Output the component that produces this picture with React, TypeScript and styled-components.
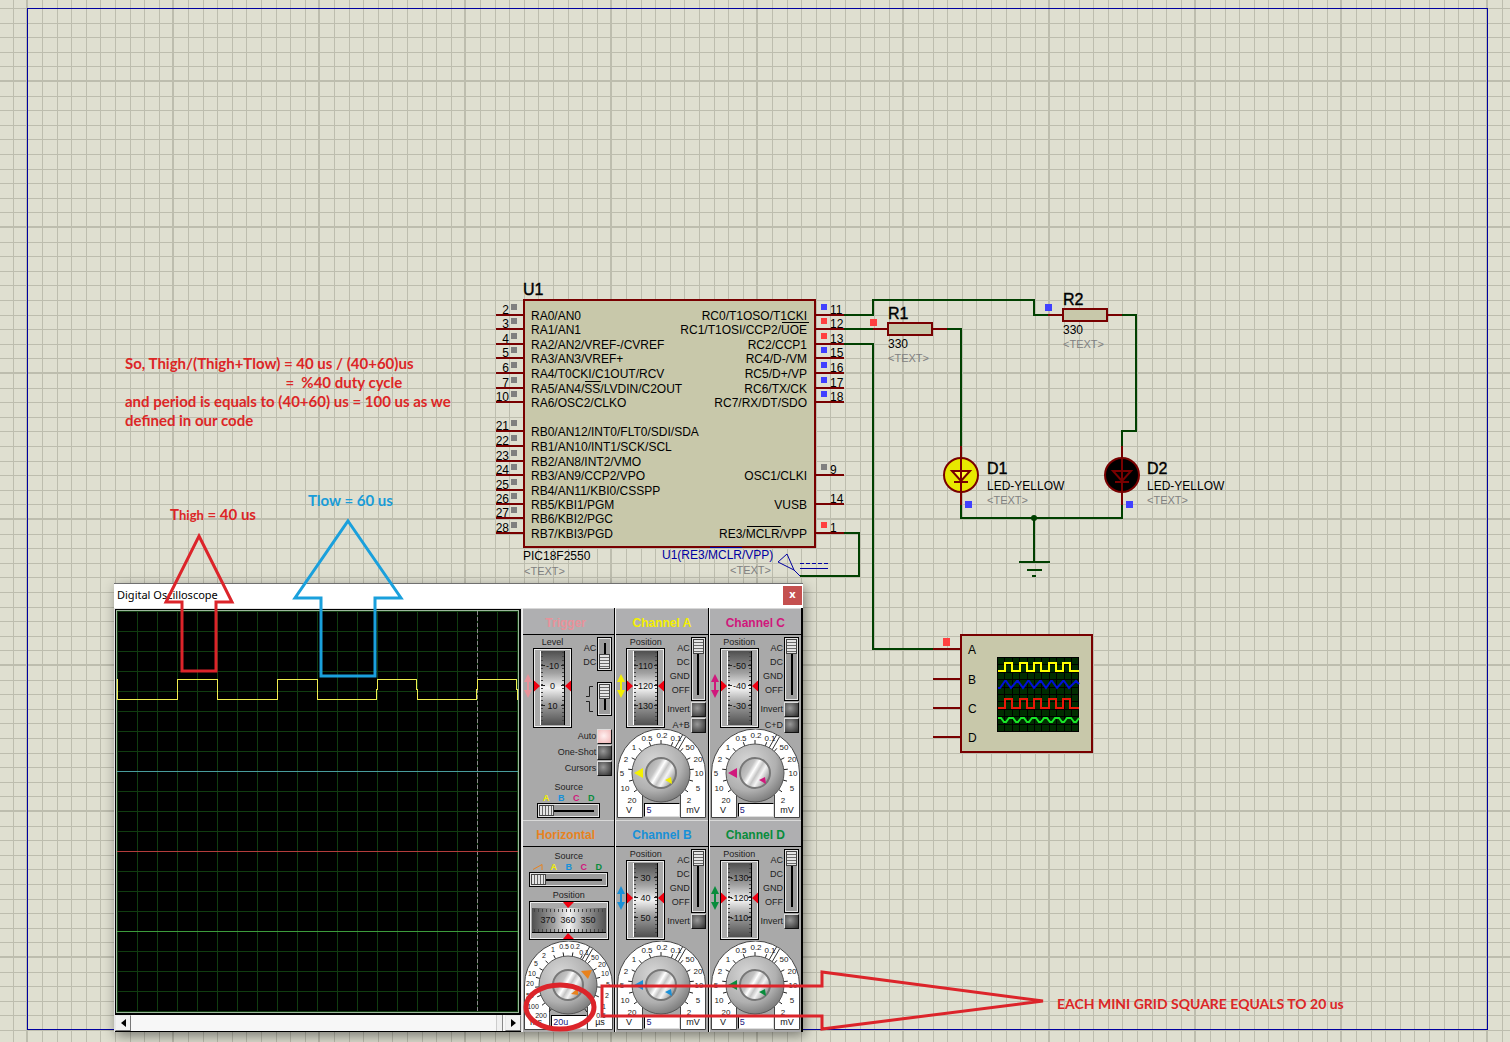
import React from "react";
import styled, { createGlobalStyle } from "styled-components";

const sans = `"Liberation Sans", Arial, sans-serif`;

const GlobalStyle = createGlobalStyle`
  *, *::before, *::after { box-sizing: border-box; }
  body { margin: 0; font-family: ${sans}; background: #dfdfd0; }
`;

/* ---------- Worksheet ---------- */

const Worksheet = styled.main`
  position: relative;
  display: flex;
  min-height: 100vh;
  padding: 8px 22px 12px 27px;
  overflow: hidden;
  background: #dfdfd0;
`;

const SheetFrame = styled.div`
  position: relative;
  flex: 1;
  border: 1px solid #0000a0;
`;

const GridLayer = styled.svg`
  position: absolute;
  inset: 0;
  width: 100%;
  height: 100%;
`;

const CanvasLayer = styled.svg`
  position: absolute;
  top: 0;
  left: 0;
  width: 1px;
  height: 1px;
  overflow: visible;
  pointer-events: none;
`;

const minorX = [16, 31, 45, 60, 74, 89, 104, 118, 133];
const minorY = [16, 30, 45, 59, 74, 89, 103, 118, 132];

function SheetGrid() {
  return (
    <GridLayer aria-hidden="true" shapeRendering="crispEdges">
      <defs>
        <pattern id="sheet" x="26" y="80" width="146" height="146" patternUnits="userSpaceOnUse">
          <g fill="#bdbdae">
            {minorX.map((x) => <rect key={x} x={x} width="1" height="146" />)}
            {minorY.map((y) => <rect key={y} y={y} height="1" width="146" />)}
            <rect width="2" height="146" />
            <rect width="146" height="2" />
          </g>
        </pattern>
      </defs>
      <rect width="100%" height="100%" fill="url(#sheet)" />
    </GridLayer>
  );
}

/* ---------- Schematic ---------- */

const Label = styled.text<{ $size?: number; $fill?: string }>`
  font: ${(p) => p.$size ?? 12}px ${sans};
  fill: ${(p) => p.$fill ?? "#000"};
`;

const RefName = styled.text`
  font: 16px ${sans};
  fill: #000;
  stroke: #000;
  stroke-width: 0.4px;
`;

const RED = "#780000";
const GREEN = "#004000";
const BODY = "#c8c8aa";
const GREY = "#808080";
const HIGH = "#ff4040";
const LOW = "#4040ff";

type Pin = [y: number, num: string, name: string, state?: string];

const leftPins: Pin[] = [
  [315, "2", "RA0/AN0", GREY],
  [329, "3", "RA1/AN1", GREY],
  [344, "4", "RA2/AN2/VREF-/CVREF", GREY],
  [358, "5", "RA3/AN3/VREF+", GREY],
  [373, "6", "RA4/T0CKI/C1OUT/RCV", GREY],
  [388, "7", "RA5/AN4/SS/LVDIN/C2OUT", GREY],
  [402, "10", "RA6/OSC2/CLKO", GREY],
  [431, "21", "RB0/AN12/INT0/FLT0/SDI/SDA", GREY],
  [446, "22", "RB1/AN10/INT1/SCK/SCL", GREY],
  [461, "23", "RB2/AN8/INT2/VMO", GREY],
  [475, "24", "RB3/AN9/CCP2/VPO", GREY],
  [490, "25", "RB4/AN11/KBI0/CSSPP", GREY],
  [504, "26", "RB5/KBI1/PGM", GREY],
  [518, "27", "RB6/KBI2/PGC", GREY],
  [533, "28", "RB7/KBI3/PGD", GREY],
];

const rightPins: Pin[] = [
  [315, "11", "RC0/T1OSO/T1CKI", LOW],
  [329, "12", "RC1/T1OSI/CCP2/UOE", HIGH],
  [344, "13", "RC2/CCP1", HIGH],
  [358, "15", "RC4/D-/VM", LOW],
  [373, "16", "RC5/D+/VP", LOW],
  [388, "17", "RC6/TX/CK", LOW],
  [402, "18", "RC7/RX/DT/SDO", LOW],
  [475, "9", "OSC1/CLKI", GREY],
  [504, "14", "VUSB"],
  [533, "1", "RE3/MCLR/VPP", HIGH],
];

function Chip() {
  return (
    <g>
      <RefName x="523" y="295">U1</RefName>
      <rect x="524" y="300" width="291" height="247" fill={BODY} stroke={RED} strokeWidth="2" />
      {leftPins.map(([y, num, name, state]) => (
        <g key={num}>
          <path d={`M496 ${y}H523`} stroke={RED} strokeWidth="2" />
          <rect x="511" y={y - 11} width="6" height="6" fill={state} />
          <Label x="509" y={y - 1} textAnchor="end">{num}</Label>
          <Label x="531" y={y + 5}>{name}</Label>
        </g>
      ))}
      {rightPins.map(([y, num, name, state]) => (
        <g key={num}>
          <path d={`M816 ${y}H844`} stroke={RED} strokeWidth="2" />
          {state && <rect x="821" y={y - 11} width="6" height="6" fill={state} />}
          <Label x="830" y={y - 1}>{num}</Label>
          <Label x="807" y={y + 5} textAnchor="end">{name}</Label>
        </g>
      ))}
      <path d="M782 322.5H809M585 381.5H601M747 526.5H781" stroke="#000" />
      <Label x="523" y="560">PIC18F2550</Label>
      <Label x="524" y="575" $size={11} $fill={GREY}>&lt;TEXT&gt;</Label>
      <Label x="662" y="559" $fill="#0000a0">U1(RE3/MCLR/VPP)</Label>
      <path d="M710 547.5H742" stroke="#0000a0" />
      <Label x="730" y="574" $size={11} $fill={GREY}>&lt;TEXT&gt;</Label>
      <path d="M778 562L787 554L794 570ZM794 570L800 576" fill="none" stroke="#0000a0" />
      <path d="M800 563.5H828" stroke="#0000a0" strokeDasharray="4 2" />
      <path d="M800 568.5H828" stroke="#0000a0" />
    </g>
  );
}

function Resistor({ x, y, name }: { x: number; y: number; name: string }) {
  return (
    <g>
      <path d={`M${x - 15} ${y}H${x}M${x + 45} ${y}H${x + 59}`} stroke={RED} strokeWidth="2" />
      <rect x={x} y={y - 6} width="44" height="12" fill={BODY} stroke={RED} strokeWidth="2" />
      <RefName x={x} y={y - 10}>{name}</RefName>
      <Label x={x} y={y + 19}>330</Label>
      <Label x={x} y={y + 33} $size={11} $fill={GREY}>&lt;TEXT&gt;</Label>
    </g>
  );
}

function Led({ x, name, lit, textX }: { x: number; name: string; lit: boolean; textX: number }) {
  return (
    <g>
      <circle cx={x} cy="475" r="17" fill={lit ? "#e8e800" : "#000"} stroke={RED} strokeWidth="2" />
      <path
        d={`M${x} 446V505M${x - 9} 471H${x + 9}L${x} 481ZM${x - 7} 482H${x + 7}`}
        fill={lit ? "#ffff30" : "#000"}
        stroke={RED}
        strokeWidth="2"
      />
      <rect x={x + 4} y="501" width="7" height="7" fill={LOW} />
      <RefName x={textX} y="474">{name}</RefName>
      <Label x={textX} y="490">LED-YELLOW</Label>
      <Label x={textX} y="504" $size={11} $fill={GREY}>&lt;TEXT&gt;</Label>
    </g>
  );
}

const miniCols = Array.from({ length: 12 }, (_, i) => 997 + Math.round(i * 7.4));
const miniRows = Array.from({ length: 11 }, (_, i) => 657 + Math.round(i * 7.4));

function squareTrace(low: number, high: number) {
  return `M998 ${low}H1005V${high}H1012V${low}H1020V${high}H1027V${low}H1034V${high}H1041V${low}H1049V${high}H1056V${low}H1063V${high}H1070V${low}H1079`;
}

function ScopeSymbol() {
  const zigzag = "M998 688H1000" + [0, 1, 2, 3, 4, 5, 6].map((i) => {
    const s = 1000 + Math.round(i * 11.6);
    return i === 6 ? `L${s + 6} 681L1079 684` : `L${s + 5} 681H${s + 6}L${s + 11} 688`;
  }).join("");
  const ripple = "M998 718" + [0, 1, 2, 3, 4, 5, 6].map((i) => {
    const s = 1000 + Math.round(i * 11.6);
    return `L${s + 1} 718L${s + 4} 722H${s + 6}L${s + 9} 718`;
  }).join("");
  return (
    <g>
      <rect x="961" y="635" width="131" height="117" fill={BODY} stroke={RED} strokeWidth="2" />
      {["A", "B", "C", "D"].map((n, i) => {
        const y = [649, 679, 708, 737][i];
        return (
          <g key={n}>
            <path d={`M933 ${y}H961`} stroke={RED} strokeWidth="2" />
            <Label x="968" y={y + 5}>{n}</Label>
          </g>
        );
      })}
      <rect x="943" y="638" width="7" height="8" fill={HIGH} />
      <rect x="997" y="657" width="82" height="74" fill="#002c00" />
      <path
        d={miniCols.map((x) => `M${x}.5 657V731`).join("") + miniRows.map((y) => `M997 ${y}.5H1079`).join("")}
        stroke="#000"
      />
      <g fill="none" strokeWidth="2">
        <path d={squareTrace(671, 663)} stroke="#ffff00" />
        <path d={zigzag} stroke="#0010d8" />
        <path d={squareTrace(708, 699)} stroke="#e81808" />
        <path d={ripple} stroke="#18e828" />
      </g>
    </g>
  );
}

function Schematic() {
  return (
    <CanvasLayer role="img" aria-label="PIC18F2550 PWM circuit">
      <g fill="none" stroke={GREEN} strokeWidth="2">
        <path d="M844 315H873V300H1034V315H1049" />
        <path d="M844 329H873M946 329H961V446" />
        <path d="M844 344H873V649H933" />
        <path d="M1121 315H1136V431H1122V446" />
        <path d="M961 505V518H1122V505M1034 518V561" />
        <path d="M1019 562H1050M1027 570H1042M1032 576H1036" />
        <path d="M844 533H859V576H800" />
      </g>
      <circle cx="1034" cy="518" r="3" fill={GREEN} />
      <Chip />
      <Resistor x={888} y={329} name="R1" />
      <Resistor x={1063} y={315} name="R2" />
      <rect x="870" y="319" width="7" height="7" fill={HIGH} />
      <rect x="1045" y="304" width="7" height="7" fill={LOW} />
      <Led x={961} name="D1" lit textX={987} />
      <Led x={1122} name="D2" lit={false} textX={1147} />
      <ScopeSymbol />
    </CanvasLayer>
  );
}

/* ---------- Oscilloscope window ---------- */

const Window = styled.section`
  position: absolute;
  top: 583px;
  left: 114px;
  width: 689px;
  border-top: 1px solid #707070;
  background: #fff;
  box-shadow: 2px 4px 12px rgba(0, 0, 0, 0.45);
`;

const TitleBar = styled.header`
  display: flex;
  align-items: center;
  justify-content: space-between;
  height: 24px;
  padding: 0 1px 2px 3px;
`;

const WindowTitle = styled.h1`
  margin: 0;
  font: 11px/20px "Noto Sans", "Open Sans", sans-serif;
  color: #000;
`;

const CloseButton = styled.button`
  width: 19px;
  height: 19px;
  padding: 0 0 2px;
  border: 0;
  background: #c4504f;
  color: #fff;
  font: bold 11px/16px "Open Sans", sans-serif;
`;

const WindowBody = styled.div`
  display: grid;
  grid-template-columns: 406px 1fr;
  gap: 1px;
  padding-left: 1px;
  background: #e4e4e4;
`;

const ScreenColumn = styled.div`
  display: flex;
  flex-direction: column;
  padding-top: 1px;
`;

const ScreenBezel = styled.div`
  border: 1px solid #000;
  border-right: 2px solid #000;
  height: 405px;
  background: #000;
`;

const Screen = styled.svg`
  display: block;
  width: 403px;
  height: 403px;
`;

const ScrollBar = styled.div`
  display: flex;
  justify-content: space-between;
  height: 18px;
  border: solid #000;
  border-width: 1px 0;
  background: #f7f7f7;
`;

const ScrollButton = styled.button`
  display: flex;
  align-items: center;
  justify-content: center;
  width: 16px;
  height: 16px;
  padding: 0;
  border: 1px solid #e8e8e8;
  border-right-color: #777;
  border-bottom-color: #777;
  background: #f2f2f2;
`;

const ScrollEnd = styled.div`
  display: flex;
  gap: 2px;
`;

const ScrollThumb = styled.div`
  width: 7px;
  height: 16px;
  border-right: 1px solid #888;
  border-left: 1px solid #ccc;
  background: #f0f0f0;
`;

const gridSteps = Array.from({ length: 21 }, (_, i) => i * 20 + 1);

function ScopeScreen() {
  return (
    <Screen viewBox="0 0 403 403" role="img" aria-label="Traces" shapeRendering="crispEdges">
      <rect width="403" height="403" fill="#000" />
      <path
        d={gridSteps.map((p) => `M${p}.5 0V403M0 ${p}.5H403`).join("")}
        stroke="#103c10"
      />
      <path d="M.5 403V.5H402.5V403M0 402.5H403" fill="none" stroke="#9db79d" />
      <path d="M361.5 1V402" stroke="#8a8a8a" strokeDasharray="4 2" />
      <path d="M1 161.5H402" stroke="#489c9c" />
      <path d="M1 241.5H402" stroke="#b43c3c" />
      <path d="M1 321.5H402" stroke="#3c9c3c" />
      <path
        d="M1.5 69V89.5H61.5V69.5H101.5V89.5H161.5V69.5H201.5V89.5H260.5V79.5H261.5V69.5H300.5V79.5H301.5V89.5H360.5V79.5H361.5V69.5H400.5V79.5H401.5V90"
        fill="none"
        stroke="#f0ee50"
      />
    </Screen>
  );
}

const ControlDeck = styled.div`
  display: grid;
  grid-template-columns: repeat(3, 1fr);
  grid-template-rows: repeat(2, 212px);
  border-right: 1px solid #000;
`;

const Panel = styled.section`
  display: flex;
  flex-direction: column;
  border-left: 1px solid #f0f0f0;
  border-right: 1px solid #000;
  background: #a9a9a9;
`;

const PanelTitle = styled.h2<{ $color: string; $inset?: boolean }>`
  height: 27px;
  margin: 0;
  padding: 2px ${(p) => (p.$inset ? 6 : 0)}px 0 0;
  border-bottom: 1px solid #000;
  border-top: 1px solid #d8d8d8;
  background: #afafb1;
  color: ${(p) => p.$color};
  font: bold 12px/24px ${sans};
  text-align: center;
`;

const Top = styled.div`
  display: flex;
  height: 94px;
  padding: 2px 2px 0 1px;
`;

const ArrowSlot = styled.svg`
  flex: none;
  width: 8px;
  height: 24px;
  margin: 37px 1px 0 0;
`;

const PositionColumn = styled.div`
  display: flex;
  flex: none;
  flex-direction: column;
  align-items: center;
  width: 39px;
`;

const Caption = styled.span`
  color: #222;
  font: 9px/11px ${sans};
  white-space: nowrap;
`;

const SwitchColumn = styled.div`
  display: flex;
  flex: 1;
  flex-direction: column;
  gap: 1px;
`;

const SwitchRow = styled.div`
  display: flex;
  justify-content: flex-end;
  gap: 1px;
`;

const SwitchLabels = styled.div`
  display: flex;
  flex-direction: column;
  padding-top: 4px;
  color: #222;
  font: 9px/14px ${sans};
  text-align: right;
`;

const SliderFrame = styled.div<{ $w: number; $h: number }>`
  display: flex;
  align-items: center;
  justify-content: center;
  width: ${(p) => p.$w}px;
  height: ${(p) => p.$h}px;
  border: 1px solid #000;
  outline: 1px solid #e4e4e4;
  outline-offset: -2px;
  background: #9c9c9c;
`;

const Range = styled.input<{ $vertical?: boolean }>`
  appearance: none;
  width: calc(100% - 2px);
  height: calc(100% - 2px);
  margin: 0;
  writing-mode: ${(p) => (p.$vertical ? "vertical-lr" : "horizontal-tb")};
  background: linear-gradient(#000, #000) center / ${(p) =>
    p.$vertical ? "2px calc(100% - 8px)" : "calc(100% - 8px) 2px"} no-repeat;

  &::-webkit-slider-thumb {
    appearance: none;
    width: ${(p) => (p.$vertical ? 11 : 15)}px;
    height: ${(p) => (p.$vertical ? 15 : 11)}px;
    border: 1px solid #444;
    background: repeating-linear-gradient(
      ${(p) => (p.$vertical ? "180deg" : "90deg")},
      #e4e4e4 0 2px,
      #6a6a6a 2px 3px
    );
  }
`;

const LampLabel = styled.label`
  display: flex;
  align-items: center;
  justify-content: flex-end;
  gap: 1px;
  height: 15px;
  color: #222;
  font: 9px/15px ${sans};
  white-space: nowrap;
`;

const Lamp = styled.button<{ $on?: boolean }>`
  width: 15px;
  height: 15px;
  padding: 0;
  border: 1px solid #111;
  border-top-color: #ddd;
  border-left-color: #ddd;
  background: ${(p) =>
    p.$on
      ? "radial-gradient(circle at 45% 45%, #fff0f0, #f0b4b4)"
      : "radial-gradient(circle at 40% 40%, #999, #2c2c2c)"};
`;

const WheelArt = styled.svg`
  display: block;
  flex: none;
`;

const Digits = styled.text`
  font: 9px ${sans};
  fill: #111;
  text-anchor: middle;
`;

const DialDigits = styled.text<{ $size: number }>`
  font: ${(p) => p.$size}px ${sans};
  fill: #222;
  text-anchor: middle;
`;

function VerticalWheel({ values }: { values: string[] }) {
  const ticks = Array.from({ length: 18 }, (_, i) => 4.5 + i * 4);
  return (
    <WheelArt width="39" height="80" viewBox="0 0 39 80">
      <defs>
        <linearGradient id="wheelV" x1="0" y1="0" x2="0" y2="1">
          <stop offset="0" stopColor="#505050" />
          <stop offset=".3" stopColor="#a2a2a2" />
          <stop offset=".5" stopColor="#f4f4f4" />
          <stop offset=".7" stopColor="#a2a2a2" />
          <stop offset="1" stopColor="#505050" />
        </linearGradient>
      </defs>
      <rect x=".5" y=".5" width="38" height="79" fill="#aaa" stroke="#000" />
      <rect x="1.5" y="1.5" width="36" height="77" fill="none" stroke="#eee" />
      <rect x="7" y="3" width="25" height="74" fill="url(#wheelV)" />
      <path d="M7.5 3V77" stroke="#fff" />
      <path d="M31.5 3V77" stroke="#000" />
      <path d={ticks.map((y) => `M8 ${y}h2M29 ${y}h2`).join("")} stroke="#444" />
      <path d="M8 17.5h4M28 17.5h3M8 37.5h4M28 37.5h3M8 57.5h4M28 57.5h3" stroke="#222" />
      <path d="M1 32.5L7 38L1 43.5ZM38 32.5L32 38L38 43.5Z" fill="#f00010" />
      {values.map((v, i) => <Digits key={v} x="19.5" y={21 + i * 20}>{v}</Digits>)}
    </WheelArt>
  );
}

function HorizontalWheel({ values }: { values: string[] }) {
  const ticks = Array.from({ length: 18 }, (_, i) => 5.5 + i * 4);
  return (
    <WheelArt width="80" height="39" viewBox="0 0 80 39">
      <defs>
        <linearGradient id="wheelH">
          <stop offset="0" stopColor="#505050" />
          <stop offset=".3" stopColor="#a2a2a2" />
          <stop offset=".5" stopColor="#f4f4f4" />
          <stop offset=".7" stopColor="#a2a2a2" />
          <stop offset="1" stopColor="#505050" />
        </linearGradient>
      </defs>
      <rect x=".5" y=".5" width="79" height="38" fill="#aaa" stroke="#000" />
      <rect x="1.5" y="1.5" width="77" height="36" fill="none" stroke="#eee" />
      <rect x="3" y="7" width="74" height="25" fill="url(#wheelH)" />
      <path d="M3 31.5H77" stroke="#000" />
      <path d={ticks.map((x) => `M${x} 8v3M${x} 28v3`).join("")} stroke="#444" />
      <path d="M34 1H45L39 7ZM34 38H45L39 32Z" fill="#f00010" />
      {values.map((v, i) => <Digits key={v} x={19 + i * 20} y="22">{v}</Digits>)}
    </WheelArt>
  );
}

const DialBox = styled.div`
  position: relative;
  width: 89px;
  margin: 0 auto;
`;

const DialArt = styled.svg`
  display: block;
  width: 89px;
  height: 89px;
`;

const DialInput = styled.input`
  position: absolute;
  right: 26px;
  bottom: 1px;
  width: 36px;
  height: 14px;
  padding: 0 1px;
  border: 1px solid #000;
  border-right-color: #ddd;
  border-bottom-color: #ddd;
  background: #fff;
  color: #202080;
  font: 9px/11px ${sans};
`;

type DialMark = [x: number, y: number, text: string];

const voltMarks: DialMark[] = [
  [5, 44, "5"], [9, 30, "2"], [17, 18, "1"], [30, 9, "0.5"], [45, 6, "0.2"], [59, 9, "0.1"],
  [73, 18, "50"], [81, 30, "20"], [82, 44, "10"], [81, 59, "5"], [72, 71, "2"],
  [15, 71, "20"], [8, 59, "10"],
];

const timeMarks: DialMark[] = [
  [40, 5, "0.5"], [51, 5, "0.2"], [60, 11, "0.1"], [71, 16, "50"], [78, 23, "20"], [81, 32, "10"],
  [84, 43, "5"], [83, 54, "2"], [80, 65, "1"], [77, 74, "0.5"], [29, 8, "1"], [20, 14, "2"],
  [12, 22, "5"], [8, 32, "10"], [6, 42, "20"], [6, 54, "50"], [9, 65, "100"], [17, 74, "200"],
];

function Dial({ color, time, value, name }: { color: string; time?: boolean; value: string; name: string }) {
  const marks = time ? timeMarks : voltMarks;
  const steps = time ? 18 : 13;
  const span = time ? 290 : 250;
  const ticks = Array.from({ length: steps }, (_, i) => {
    const a = ((-span / 2 + (i * span) / (steps - 1) - 90) * Math.PI) / 180;
    const c = Math.cos(a);
    const s = Math.sin(a);
    return `M${(44 + 29 * c).toFixed(1)} ${(44 + 29 * s).toFixed(1)}L${(44 + 33 * c).toFixed(1)} ${(44 + 33 * s).toFixed(1)}`;
  }).join("");
  return (
    <DialBox>
      <DialArt viewBox="0 0 89 89">
        <defs>
          <radialGradient id="cap" cx=".38" cy=".32" r=".8">
            <stop offset="0" stopColor="#d8d8d8" />
            <stop offset=".6" stopColor="#b0b0b0" />
            <stop offset="1" stopColor="#686868" />
          </radialGradient>
          <linearGradient id="hub" x1="0" y1="0" x2="1" y2=".6">
            <stop offset="0" stopColor="#999" />
            <stop offset=".4" stopColor="#c4c4c4" />
            <stop offset=".52" stopColor="#fff" />
            <stop offset=".64" stopColor="#c4c4c4" />
            <stop offset=".76" stopColor="#f4f4f4" />
            <stop offset="1" stopColor="#999" />
          </linearGradient>
        </defs>
        <path
          d="M.5 88.5V44A44 44 0 0 1 88.5 44V88.5H63.5V66H25.5V88.5Z"
          fill="#fff"
          stroke="#444"
        />
        <path d="M26 60H63V89H26Z" fill="#a9a9a9" />
        <path d="M65.5 6L58 19M68.5 8L61 21" stroke="#333" />
        <path d={ticks} stroke="#222" />
        <circle cx="44" cy="44" r="29" fill="url(#cap)" stroke="#555" />
        <circle cx="44" cy="44" r="15" fill="url(#hub)" stroke="#777" strokeWidth="2" />
        {time ? (
          <path d="M57 30L68 29L64 38ZM47 53L54 47V54Z" fill={color} />
        ) : (
          <path d="M17 44L26 39V49ZM48 51L54 48L55 55Z" fill={color} />
        )}
        {marks.map(([x, y, t]) => (
          <DialDigits key={`${x}-${y}`} $size={time ? 7 : 8} x={x} y={y + 3}>{t}</DialDigits>
        ))}
        <Digits x="12" y="84">{time ? "ms" : "V"}</Digits>
        <Digits x="76" y="84">{time ? "µs" : "mV"}</Digits>
      </DialArt>
      <DialInput aria-label={name} defaultValue={value} />
    </DialBox>
  );
}

function UpDown({ color }: { color: string }) {
  return (
    <ArrowSlot viewBox="0 0 8 24" aria-hidden="true">
      <path d="M4 0L8 8H5V16H8L4 24L0 16H3V8H0Z" fill={color} />
    </ArrowSlot>
  );
}

interface ChannelProps { id: string; color: string; values: string[]; sum?: string }

function ChannelPanel({ id, color, values, sum }: ChannelProps) {
  return (
    <Panel>
      <PanelTitle $color={color}>Channel {id}</PanelTitle>
      <Top>
        <UpDown color={color} />
        <PositionColumn>
          <Caption>Position</Caption>
          <VerticalWheel values={values} />
        </PositionColumn>
        <SwitchColumn>
          <SwitchRow>
            <SwitchLabels>
              <span>AC</span><span>DC</span><span>GND</span><span>OFF</span>
            </SwitchLabels>
            <SliderFrame $w={15} $h={64}>
              <Range $vertical type="range" min="0" max="3" defaultValue="0" aria-label={`Channel ${id} coupling`} />
            </SliderFrame>
          </SwitchRow>
          <LampLabel>Invert<Lamp type="button" aria-label={`Invert ${id}`} /></LampLabel>
          {sum && <LampLabel>{sum}<Lamp type="button" aria-label={sum} /></LampLabel>}
        </SwitchColumn>
      </Top>
      <Dial color={color} value="5" name={`Channel ${id} volts per division`} />
    </Panel>
  );
}

const YELLOW_UI = "#f4f000";
const BLUE_UI = "#1890d8";
const MAGENTA_UI = "#d0187c";
const GREEN_UI = "#088c3c";
const ORANGE_UI = "#e8821e";
const PINK_UI = "#e8929a";

const SourceGroup = styled.div`
  display: flex;
  flex-direction: column;
  align-items: center;
  padding-top: 6px;
`;

const SourceLetters = styled.div`
  display: flex;
  align-items: center;
  justify-content: center;
  font: bold 9px/10px ${sans};
`;

const SourceLetter = styled.span<{ $color: string }>`
  width: 15px;
  color: ${(p) => p.$color};
  text-align: center;
`;

function Source({ ramp }: { ramp?: boolean }) {
  return (
    <>
      <Caption>Source</Caption>
      <SourceLetters>
        {ramp && (
          <svg width="15" height="8" viewBox="0 0 15 8" aria-hidden="true">
            <path d="M2 6.5L11 1.5V7" fill="none" stroke={ORANGE_UI} />
          </svg>
        )}
        <SourceLetter $color={YELLOW_UI}>A</SourceLetter>
        <SourceLetter $color={BLUE_UI}>B</SourceLetter>
        <SourceLetter $color={MAGENTA_UI}>C</SourceLetter>
        <SourceLetter $color={GREEN_UI}>D</SourceLetter>
      </SourceLetters>
      <SliderFrame $w={ramp ? 79 : 63} $h={15}>
        <Range type="range" min="0" max="4" defaultValue="0" aria-label={ramp ? "Horizontal source" : "Trigger source"} />
      </SliderFrame>
    </>
  );
}

const TriggerSwitches = styled.div`
  display: flex;
  flex: 1;
  flex-direction: column;
  gap: 11px;
`;

const LampStack = styled.div`
  display: flex;
  flex-direction: column;
  gap: 1px;
  padding-right: 2px;
`;

function TriggerPanel() {
  return (
    <Panel>
      <PanelTitle $color={PINK_UI} $inset>Trigger</PanelTitle>
      <Top>
        <UpDown color={PINK_UI} />
        <PositionColumn>
          <Caption>Level</Caption>
          <VerticalWheel values={["-10", "0", "10"]} />
        </PositionColumn>
        <TriggerSwitches>
          <SwitchRow>
            <SwitchLabels><span>AC</span><span>DC</span></SwitchLabels>
            <SliderFrame $w={15} $h={34}>
              <Range $vertical type="range" min="0" max="1" defaultValue="1" aria-label="Trigger coupling" />
            </SliderFrame>
          </SwitchRow>
          <SwitchRow>
            <svg width="10" height="34" viewBox="0 0 10 34" aria-hidden="true">
              <path d="M0 14.5H3.5V4.5H7M0 19.5H3.5V29.5H7" fill="none" stroke="#222" />
            </svg>
            <SliderFrame $w={15} $h={34}>
              <Range $vertical type="range" min="0" max="1" defaultValue="0" aria-label="Trigger edge" />
            </SliderFrame>
          </SwitchRow>
        </TriggerSwitches>
      </Top>
      <LampStack>
        <LampLabel>Auto<Lamp $on type="button" aria-label="Auto" /></LampLabel>
        <LampLabel>One-Shot<Lamp type="button" aria-label="One-Shot" /></LampLabel>
        <LampLabel>Cursors<Lamp type="button" aria-label="Cursors" /></LampLabel>
      </LampStack>
      <SourceGroup><Source /></SourceGroup>
    </Panel>
  );
}

const HorizontalControls = styled.div`
  display: flex;
  flex-direction: column;
  align-items: center;
  height: 94px;
  padding-top: 4px;
`;

const PositionStrip = styled.div`
  display: flex;
  flex-direction: column;
  align-items: center;
  padding-top: 3px;
`;

function HorizontalPanel() {
  return (
    <Panel>
      <PanelTitle $color={ORANGE_UI} $inset>Horizontal</PanelTitle>
      <HorizontalControls>
        <Source ramp />
        <PositionStrip>
          <Caption>Position</Caption>
          <HorizontalWheel values={["370", "360", "350"]} />
        </PositionStrip>
      </HorizontalControls>
      <Dial color={ORANGE_UI} time value="20u" name="Time per division" />
    </Panel>
  );
}

function Oscilloscope() {
  return (
    <Window>
      <TitleBar>
        <WindowTitle>Digital Oscilloscope</WindowTitle>
        <CloseButton type="button" aria-label="Close">x</CloseButton>
      </TitleBar>
      <WindowBody>
        <ScreenColumn>
          <ScreenBezel><ScopeScreen /></ScreenBezel>
          <ScrollBar>
            <ScrollButton type="button" aria-label="Scroll left">
              <svg width="5" height="8" viewBox="0 0 5 8"><path d="M5 0V8L0 4Z" /></svg>
            </ScrollButton>
            <ScrollEnd>
              <ScrollThumb />
              <ScrollButton type="button" aria-label="Scroll right">
                <svg width="5" height="8" viewBox="0 0 5 8"><path d="M0 0V8L5 4Z" /></svg>
              </ScrollButton>
            </ScrollEnd>
          </ScrollBar>
        </ScreenColumn>
        <ControlDeck>
          <TriggerPanel />
          <ChannelPanel id="A" color={YELLOW_UI} values={["110", "120", "130"]} sum="A+B" />
          <ChannelPanel id="C" color={MAGENTA_UI} values={["-50", "-40", "-30"]} sum="C+D" />
          <HorizontalPanel />
          <ChannelPanel id="B" color={BLUE_UI} values={["30", "40", "50"]} />
          <ChannelPanel id="D" color={GREEN_UI} values={["-130", "-120", "-110"]} />
        </ControlDeck>
      </WindowBody>
    </Window>
  );
}

/* ---------- Annotations ---------- */

const Note = styled.p<{ $x: number; $y: number; $size?: number; $color?: string }>`
  position: absolute;
  left: ${(p) => p.$x}px;
  top: ${(p) => p.$y}px;
  margin: 0;
  color: ${(p) => p.$color ?? "#dc2626"};
  font: bold ${(p) => p.$size ?? 15}px/19px Lato, "Open Sans", sans-serif;
  white-space: pre;
`;

const SmallPart = styled.span`
  font-size: 13px;
`;

function Annotations() {
  return (
    <>
      <CanvasLayer aria-hidden="true">
        <g fill="none" stroke="#dc242a" strokeWidth="3">
          <path d="M199 536L232 602H216V671H182V602H166Z" />
          <path d="M602 986H822V972L1043 1001L822 1029V1016H602Z" />
          <ellipse cx="560" cy="1007" rx="34" ry="22" strokeWidth="5" />
        </g>
        <path d="M348 521L401 598H375V676H321V598H295Z" fill="none" stroke="#1aa0dc" strokeWidth="3" />
      </CanvasLayer>
      <Note $x={125} $y={354}>
        {"So, Thigh/(Thigh+Tlow) = 40 us / (40+60)us\n"}
        {"                                            =  %40 duty cycle\n"}
        {"and period is equals to (40+60) us = 100 us as we\n"}
        {"defined in our code"}
      </Note>
      <Note $x={170} $y={505}>T<SmallPart>high</SmallPart> = 40 us</Note>
      <Note $x={308} $y={491} $color="#1a9cd8">Tlow = 60 us</Note>
      <Note $x={1057} $y={994} $size={14}>EACH MINI GRID SQUARE EQUALS TO 20 us</Note>
    </>
  );
}

export default function App() {
  return (
    <>
      <GlobalStyle />
      <Worksheet>
        <SheetGrid />
        <SheetFrame />
        <Schematic />
        <Oscilloscope />
        <Annotations />
      </Worksheet>
    </>
  );
}
